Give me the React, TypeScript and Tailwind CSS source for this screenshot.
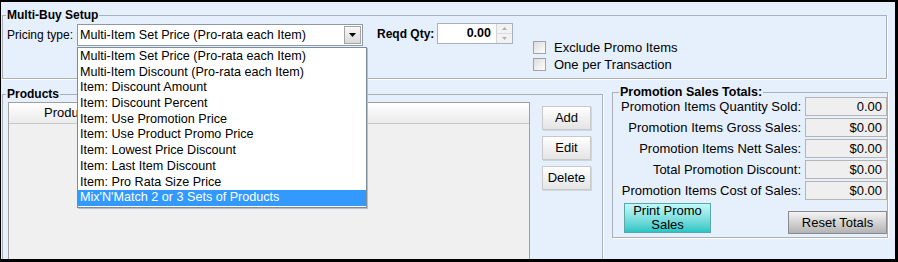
import React from "react";

const pricingTypes = [
  "Multi-Item Set Price (Pro-rata each Item)",
  "Multi-Item Discount (Pro-rata each Item)",
  "Item: Discount Amount",
  "Item: Discount Percent",
  "Item: Use Promotion Price",
  "Item: Use Product Promo Price",
  "Item: Lowest Price Discount",
  "Item: Last Item Discount",
  "Item: Pro Rata Size Price",
  "Mix'N'Match 2 or 3 Sets of Products",
];

const totals = [
  ["Promotion Items Quantity Sold:", "0.00"],
  ["Promotion Items Gross Sales:", "$0.00"],
  ["Promotion Items Nett Sales:", "$0.00"],
  ["Total Promotion Discount:", "$0.00"],
  ["Promotion Items Cost of Sales:", "$0.00"],
];

function Checkbox({ label }: { label: string }) {
  return (
    <label className="flex h-[17px] items-center">
      <span className="h-[13px] w-[13px] border border-[#a3a3a3] bg-gradient-to-br from-[#dcdcdc] to-white" />
      <span className="ml-[8px] text-[13px]">{label}</span>
    </label>
  );
}

function SideButton({ label }: { label: string }) {
  return (
    <button className="h-[24px] w-[49px] border border-[#c9c9c9] bg-gradient-to-b from-white to-[#e4e4e4] text-[13px] text-black shadow-[1px_1px_0_#d0d6de]">
      {label}
    </button>
  );
}

export default function App() {
  return (
    <div className="h-[262px] w-[898px] bg-black pb-[3px] pl-[1px] pr-[3px] pt-[2px] font-['Liberation_Sans',Arial,sans-serif] text-black">
      <div className="relative h-full w-full overflow-hidden bg-[#e6effc]">
        {/* Multi-Buy Setup */}
        <fieldset className="ml-[1px] mt-[6px] h-[71px] w-[885px] border border-[#aab0b8] px-0 pb-0 shadow-[1px_1px_0_#fff]">
          <legend className="ml-[3px] px-[1px] text-[12px] font-bold leading-[14px]">
            Multi-Buy Setup
          </legend>
          <div className="flex items-start pl-[4px] pt-[2px]">
            <div className="flex h-[22px] items-center">
              <span className="w-[70px] text-[12px]">Pricing type:</span>
              <div className="flex h-[22px] w-[286px] items-center border border-[#8d99a6] bg-white">
                <span className="flex-1 pl-[2px] text-[12.6px]">
                  Multi-Item Set Price (Pro-rata each Item)
                </span>
                <span className="mr-[1px] flex h-[18px] w-[17px] items-center justify-center border border-[#a4a4a4] bg-gradient-to-b from-[#f8f8f8] to-[#d9d9d9]">
                  <svg width="7" height="4" viewBox="0 0 7 4">
                    <path d="M0 0h7L3.5 4z" fill="#000" />
                  </svg>
                </span>
              </div>
            </div>
            <div className="ml-[14px] mt-[-1px] flex h-[21px] items-center">
              <span className="w-[60px] text-[12px] font-bold">Reqd Qty:</span>
              <div className="flex h-[21px] w-[76px] border border-[#a9b1ba] bg-white">
                <span className="flex-1 pr-[5px] text-right text-[12.5px] font-bold leading-[19px]">
                  0.00
                </span>
                <div className="flex w-[16px] flex-col border-l border-[#d4d4d4] bg-[#f2f2f2]">
                  <span className="flex flex-1 items-center justify-center border-b border-[#dcdcdc]">
                    <svg width="5" height="3" viewBox="0 0 5 3">
                      <path d="M0 3h5L2.5 0z" fill="#b0b0b0" />
                    </svg>
                  </span>
                  <span className="flex flex-1 items-center justify-center">
                    <svg width="5" height="3" viewBox="0 0 5 3">
                      <path d="M0 0h5L2.5 3z" fill="#b0b0b0" />
                    </svg>
                  </span>
                </div>
              </div>
            </div>
            <div className="ml-[20px] mt-[15px] flex flex-col">
              <Checkbox label="Exclude Promo Items" />
              <Checkbox label="One per Transaction" />
            </div>
          </div>
        </fieldset>

        <div className="flex items-start">
          {/* Products */}
          <fieldset className="ml-[1px] mt-[8px] h-[200px] w-[601px] border border-[#aab0b8] px-0 pb-0 shadow-[1px_1px_0_#fff]">
            <legend className="ml-[3px] px-[1px] text-[12px] font-bold leading-[14px]">
              Products
            </legend>
            <div className="flex items-start pl-[5px] pt-[1px]">
              <div className="h-[170px] w-[522px] border border-[#a0a0a0] bg-[#f0f0f0]">
                <div className="flex h-[21px] items-center border-b border-[#c8c8c8] bg-gradient-to-b from-white to-[#ebebeb]">
                  <span className="pl-[35px] text-[13px]">Product</span>
                </div>
              </div>
              <div className="ml-[12px] mt-[4px] flex flex-col gap-[6px]">
                <SideButton label="Add" />
                <SideButton label="Edit" />
                <SideButton label="Delete" />
              </div>
            </div>
          </fieldset>

          {/* Promotion Sales Totals */}
          <fieldset className="ml-[9px] mt-[8px] h-[151px] w-[276px] border border-[#aab0b8] px-0 pb-0 shadow-[1px_1px_0_#fff]">
            <legend className="ml-[6px] px-[1px] text-[12.5px] font-bold leading-[11px]">
              Promotion Sales Totals:
            </legend>
            <div className="mt-[-1px] flex flex-col gap-[2px]">
              {totals.map(([label, value]) => (
                <div key={label} className="flex h-[19px] items-center justify-end">
                  <span className="mr-[4px] text-[13px] leading-[15px]">{label}</span>
                  <span className="h-[19px] w-[82px] border border-[#b4b4b4] bg-[#efefef] pr-[4px] text-right text-[13px] leading-[17px]">
                    {value}
                  </span>
                </div>
              ))}
            </div>
            <div className="mt-[3px] flex items-start justify-between pl-[11px]">
              <button className="h-[30px] w-[87px] border border-[#58a8a8] bg-gradient-to-b from-[#c2fafa] to-[#22c6c6] text-[13px] leading-[14px] text-black">
                Print Promo
                <br />
                Sales
              </button>
              <button className="mt-[8px] h-[23px] w-[99px] border border-[#8a8a8a] bg-gradient-to-b from-[#f4f4f4] to-[#b3b3b3] text-[13px] text-black">
                Reset Totals
              </button>
            </div>
          </fieldset>
        </div>

        {/* Open pricing type list */}
        <div className="absolute left-[76px] top-[45px] w-[290px] border border-[#7d8b99] bg-white py-[1px] shadow-[1px_1px_0_#b8c0c8]">
          {pricingTypes.map((t, i) => (
            <div
              key={t}
              className={
                i === pricingTypes.length - 1
                  ? "h-[15.7px] bg-[#3399ff] pl-[2px] text-[12.6px] leading-[15.7px] text-white"
                  : "h-[15.7px] pl-[2px] text-[12.6px] leading-[15.7px]"
              }
            >
              {t}
            </div>
          ))}
        </div>
      </div>
    </div>
  );
}
